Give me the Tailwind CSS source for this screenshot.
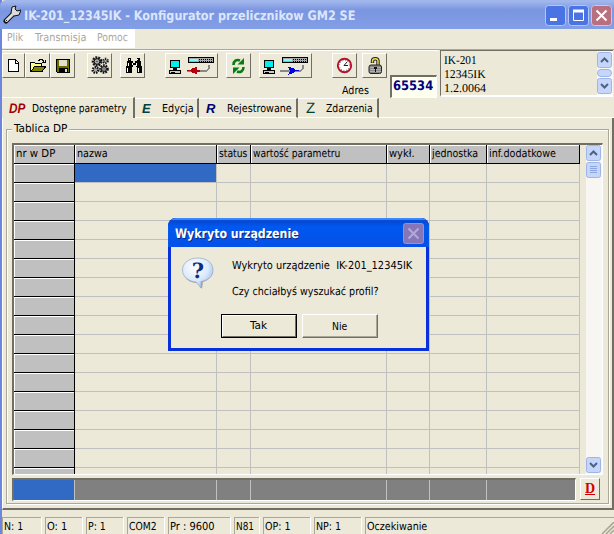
<!DOCTYPE html>
<html lang="pl">
<head>
<meta charset="utf-8">
<title>IK-201_12345IK - Konfigurator przelicznikow GM2 SE</title>
<script src="https://cdn.jsdelivr.net/npm/@tailwindcss/browser@4"></script>
</head>
<body class="w-[614px] h-[534px] overflow-hidden bg-[#ece9d8] font-['DejaVu_Sans_Condensed','DejaVu_Sans',sans-serif] text-[11px] leading-[14px] text-black [text-rendering:geometricPrecision]">
<div class="relative w-[614px] h-[534px] flex flex-col border-l-2 border-[#6c86de]">
  <!-- title bar -->
  <header class="-ml-[2px] h-[29px] shrink-0 flex items-center pl-[3px] pr-[2px] bg-linear-to-b from-[#a0b6ec] from-5% via-[#7b95e0] via-35% to-[#829fe6] rounded-tl-md">
    <svg class="w-[18px] h-[20px]" viewBox="3 5 18 20"><path d="M6 21l8-8" stroke="#111" stroke-width="5" stroke-linecap="round"/><path d="M12 7l-1 6 3 3 5-1 2-5-4 1-2-2 1-3z" fill="#ddd" stroke="#111"/><path d="M6.500 20.500l8-8" stroke="#ddd" stroke-width="3" stroke-linecap="round"/><path d="M6 20.500h1" stroke="#222" stroke-width="1"/></svg>
    <h1 class="ml-[3px] text-[13px] font-bold text-[#dce6fb] leading-5 grow pt-[4px]"><span data-w="331">IK-201_12345IK - Konfigurator przelicznikow GM2 SE</span></h1>
    <div class="flex gap-[2px] pt-[2px]">
      <svg class="size-[21px]" viewBox="0 0 21 21"><rect x=".5" y=".5" width="20" height="20" rx="3" fill="#4a74e4" stroke="#b5c7f5"/><path d="M5 14.500h7" stroke="#fff" stroke-width="3"/></svg>
      <svg class="size-[21px]" viewBox="0 0 21 21"><rect x=".5" y=".5" width="20" height="20" rx="3" fill="#4a74e4" stroke="#b5c7f5"/><path d="M5.500 6v9.500h10V6M5 6h11" stroke="#fff" fill="none"/><path d="M5 6h11" stroke="#fff" stroke-width="3"/></svg>
      <svg class="size-[21px]" viewBox="0 0 21 21"><rect x=".5" y=".5" width="20" height="20" rx="3" fill="#b8707e" stroke="#d0c4e4"/><path d="M5.500 5.500l10 10M15.500 5.500l-10 10" stroke="#fff" stroke-width="2"/></svg>
    </div>
  </header>
  <!-- menu -->
  <nav class="h-[20px] shrink-0 flex text-[#aca899]">
    <div class="w-[133px] h-[19px] bg-white flex pl-[5px] pt-[2px]">
      <span class="w-[28px]"><span data-w="16">Plik</span></span><span class="w-[62px]"><span data-w="51">Transmisja</span></span><span><span data-w="31">Pomoc</span></span>
    </div>
  </nav>
  <!-- toolbar -->
  <section class="h-[48px] shrink-0 flex border-t border-[#aca899] text-black">
    <div class="grow flex items-start border-t border-white pt-[2px]">
      <button class="w-[23px] h-[25px] border border-t-white border-l-white border-r-[#716f64] border-b-[#716f64]"><svg class="block w-[21px] h-[23px]" shape-rendering="crispEdges" viewBox="3 54 21 23"><path d="M8.500 59.500h7l3 3v9h-10z" fill="#fff" stroke="#000"/><path d="M15.500 59v4h3" fill="none" stroke="#000"/></svg></button>
      <button class="w-[25px] h-[25px] border border-t-white border-l-white border-r-[#716f64] border-b-[#716f64]"><svg class="block w-[23px] h-[23px]" shape-rendering="crispEdges" viewBox="26 54 23 23"><path d="M30.500 71.500v-9h4l1 1h6v3" fill="#ffff80" stroke="#000"/><path d="M31 71.500l4-5.500h11l-4 5.500z" fill="#808000" stroke="#000"/><path d="M38 60.500h1l1-1h2l2 2M42 62.500h3v-3" fill="none" stroke="#000"/></svg></button>
      <button class="w-[25px] h-[25px] border border-t-white border-l-white border-r-[#716f64] border-b-[#716f64]"><svg class="block w-[23px] h-[23px]" shape-rendering="crispEdges" viewBox="51 54 23 23"><path d="M56.500 59.500h13v13h-12l-1-1z" fill="#6b6b00" stroke="#000"/><path d="M59 60h8v6h-8z" fill="#e2dfcf"/><path d="M59 67.500h9v5h-9z" fill="#000"/><path d="M65 69h2v3h-2z" fill="#ddd"/></svg></button>
      <button class="ml-[12px] w-[25px] h-[25px] border border-t-white border-l-white border-r-[#716f64] border-b-[#716f64]"><svg class="block w-[23px] h-[23px]" viewBox="88 54 23 23"><g fill="#aaa" stroke="#111"><circle cx="97" cy="61.500" r="4" stroke-width="2.600" stroke-dasharray="1.800 1"/><circle cx="97" cy="61.500" r="2.800"/><circle cx="104" cy="69" r="3.600" stroke-width="2.400" stroke-dasharray="1.600 1"/><circle cx="104" cy="69" r="2.400"/><circle cx="95.500" cy="70" r="2.800" stroke-width="2.400" stroke-dasharray="1.400 1"/><circle cx="105.500" cy="61" r="2.200" stroke-width="2.200" stroke-dasharray="1.200 1"/></g><path d="M96.500 61h1v1h-1zM103.500 68.500h1v1h-1z" fill="#111"/></svg></button>
      <button class="ml-[8px] w-[25px] h-[25px] border border-t-white border-l-white border-r-[#716f64] border-b-[#716f64]"><svg class="block w-[23px] h-[23px]" shape-rendering="crispEdges" viewBox="121 54 23 23"><path d="M128 58h3v3h2v2h2v-2h2v-3h3v3h1v5h1v7h-5v-6h-1v-2h-3v2h-1v6h-6v-7h1v-5h1z" fill="#000"/><path d="M129 59h1v1h-1zM137 59h1v1h-1zM128 63h1v3h-1zM127 68h1v4h-1zM132 63h1v2h-1zM136 63h1v3h-1zM138 68h1v4h-1z" fill="#fff"/></svg></button>
      <button class="ml-[20px] w-[53px] h-[25px] border border-t-white border-l-white border-r-[#716f64] border-b-[#716f64]"><svg class="block w-[51px] h-[23px]" shape-rendering="crispEdges" viewBox="166 54 51 23"><path d="M170.500 60.500h9v7h-9z" fill="#0ee" stroke="#000"/><path d="M173 68h4v2h-4z" fill="#000"/><path d="M169.500 70.500h11v3h-11z" fill="#ccc" stroke="#000"/><path d="M171 72h4" stroke="#000"/><path d="M188.500 57.500h25v5h-25z" fill="#aaa" stroke="#000"/><path d="M190 59h8v2h-8z" fill="#7ff"/><path d="M199 59.500h14M199 61.500h14" stroke="#000" stroke-dasharray="1 1"/><path d="M187 70.500h20l2-2v-4" fill="none" stroke="#888" stroke-width="2"/><path d="M187 70h3l3-2 4-1v7l-4-1-3-2h-3zM197 70h3v2h-3z" fill="#b00010"/></svg></button>
      <button class="ml-[8px] w-[25px] h-[25px] border border-t-white border-l-white border-r-[#716f64] border-b-[#716f64]"><svg class="block w-[23px] h-[23px]" viewBox="227 54 23 23"><path d="M233.500 65c0-4 3-6 6.500-4.500M243.500 67c0 4-3 6-6.500 4.500" fill="none" stroke="#087c10" stroke-width="2.600"/><path d="M237.500 64.500h6.500v-6.500zM239.500 67.500h-6.500v6.500z" fill="#087c10"/></svg></button>
      <button class="ml-[8px] w-[53px] h-[25px] border border-t-white border-l-white border-r-[#716f64] border-b-[#716f64]"><svg class="block w-[51px] h-[23px]" shape-rendering="crispEdges" viewBox="260 54 51 23"><path d="M264.500 60.500h9v7h-9z" fill="#0ee" stroke="#000"/><path d="M267 68h4v2h-4z" fill="#000"/><path d="M263.500 70.500h11v3h-11z" fill="#ccc" stroke="#000"/><path d="M265 72h4" stroke="#000"/><path d="M282.500 57.500h25v5h-25z" fill="#aaa" stroke="#000"/><path d="M284 59h8v2h-8z" fill="#7ff"/><path d="M293 59.500h14M293 61.500h14" stroke="#000" stroke-dasharray="1 1"/><path d="M280 70.500h21l2-2v-4" fill="none" stroke="#888" stroke-width="2"/><path d="M288 67l5 1 3 2h3v1h-3l-3 2-5 2 2-4z" fill="#0000e8"/></svg></button>
      <button class="ml-[20px] w-[25px] h-[25px] border border-t-white border-l-white border-r-[#716f64] border-b-[#716f64]"><svg class="block w-[23px] h-[23px]" viewBox="333 54 23 23"><circle cx="344.500" cy="65.500" r="6.700" fill="#fff" stroke="#b8102c" stroke-width="1.900"/><circle cx="344.500" cy="65.500" r="5" fill="none" stroke="#333" stroke-dasharray=".7 1.920"/><path d="M347 62l-3 3.500h4" fill="none" stroke="#222"/></svg></button>
      <button class="ml-[5px] w-[25px] h-[25px] border border-t-white border-l-white border-r-[#716f64] border-b-[#716f64]"><svg class="block w-[23px] h-[23px]" viewBox="363 54 23 23"><path d="M372.500 63v-2c0-3 5.500-3 5.500 0v4" fill="none" stroke="#222" stroke-width="3.400"/><path d="M372.500 62.500v-1.500c0-3 5.500-3 5.500 0v4" fill="none" stroke="#eee14b" stroke-width="1.400"/><rect x="369" y="65" width="12.500" height="8.500" rx="2" fill="#888" stroke="#222"/><path d="M370 67.500h11M370 69.500h11M370 71.500h11" stroke="#ccc" stroke-width=".6"/><path d="M374 67h3v2h-1v3h-1v-3h-1z" fill="#111"/></svg></button>
    </div>
    <div class="w-[173px] ml-[2px] mr-px border-t border-l border-[#716f64] border-b-2 border-b-white flex bg-[#ece9d8]">
      <div class="grow pl-[3px] pt-[2px] font-['Liberation_Serif',serif] text-[12px] leading-[14px]"><div><span data-w="33">IK-201</span></div><div><span data-w="42">12345IK</span></div><div><span data-w="42">1.2.0064</span></div></div>
      <div class="w-[16px] flex flex-col justify-between bg-[#f8f8f4] py-px">
        <svg class="w-[15px] h-[16px]" viewBox="0 0 15 16"><rect x=".5" y=".5" width="14" height="15" rx="2" fill="#c6d6fb" stroke="#9eb5e8"/><path d="M4 10l3.500-3.500L11 10" fill="none" stroke="#4d6185" stroke-width="2"/></svg>
        <div class="h-[8px] w-[15px] rounded-sm border border-[#9eb5e8] bg-[#c6d6fb]"></div>
        <svg class="w-[15px] h-[16px]" viewBox="0 0 15 16"><rect x=".5" y=".5" width="14" height="15" rx="2" fill="#c6d6fb" stroke="#9eb5e8"/><path d="M4 6l3.500 3.500L11 6" fill="none" stroke="#4d6185" stroke-width="2"/></svg>
      </div>
    </div>
  </section>
  <!-- address label and field overlap the toolbar's lower edge -->
  <span class="absolute left-[340px] top-[84px]"><span data-w="27">Adres</span></span>
  <div class="absolute left-[388px] top-[75px] w-[47px] h-[23px] bg-[#fffff0] border-t-2 border-l-2 border-[#716f64] border-r border-b border-r-white border-b-white pl-px font-['DejaVu_Sans',sans-serif] font-bold text-[13px] leading-[19px] text-[#000080]"><span data-w="40">65534</span></div>
  <!-- tabs -->
  <div class="h-[21px] shrink-0 flex items-end text-black">
    <div class="h-[21px] w-[133px] border-t border-white border-r-2 border-r-[#716f64] flex items-start pl-[7px] pt-[2px]"><i class="w-[23px] font-['Liberation_Sans',sans-serif] font-bold text-[14px] leading-[16px] text-[#a00000]"><span data-w="16">DP</span></i><span class="pt-[2px]" ><span data-w="95">Dostępne parametry</span></span></div>
    <div class="h-[20px] w-[64px] border-t border-b border-white border-r-2 border-r-[#716f64] flex pl-[7px] pt-[2px]"><i class="w-[20px] font-['Liberation_Sans',sans-serif] font-bold text-[13px] leading-[15px] text-[#004040]">E</i><span class="pt-px"><span data-w="32">Edycja</span></span></div>
    <div class="h-[20px] w-[99px] border-t border-b border-white border-r-2 border-r-[#716f64] flex pl-[7px] pt-[2px]"><i class="w-[21px] font-['Liberation_Sans',sans-serif] font-bold text-[13px] leading-[15px] text-[#000070]">R</i><span class="pt-px"><span data-w="65">Rejestrowane</span></span></div>
    <div class="h-[20px] w-[81px] border-t border-b border-white border-r-2 border-r-[#716f64] flex pl-[8px] pt-[2px]"><i class="w-[20px] font-['Liberation_Sans',sans-serif] not-italic text-[15px] leading-[15px] text-[#004030]">Z</i><span class="pt-px"><span data-w="47">Zdarzenia</span></span></div>
    <div class="grow h-px bg-white"></div>
  </div>
  <!-- tab page -->
  <main class="relative h-[392px] shrink-0 flex flex-col border-r-2 border-b-2 border-[#716f64] border-l border-l-white pt-[11px] px-[3px] pb-[4px]">
    <div class="grow min-h-0 border border-[#aca899] shadow-[1px_1px_0_#fff,inset_1px_1px_0_#fff] flex flex-col pl-[5px] pr-[5px] pt-[13px] ">
      <div class="h-[332px] flex border-t-2 border-l-2 border-t-[#716f64] border-l-[#716f64] border-r border-b border-r-white border-b-white overflow-hidden">
        <div id="grid" class="w-[566px] shrink-0 overflow-hidden h-[329px]"></div>
        <div class="w-[6px]"></div>
        <div class="w-[16px] flex flex-col bg-[#f7f6f2]">
          <svg class="w-[16px] h-[17px]" viewBox="0 0 16 17"><rect x=".5" y=".5" width="14" height="15" rx="2" fill="#c6d6fb" stroke="#9eb5e8"/><path d="M4 10l3.500-3.500L11 10" fill="none" stroke="#4d6185" stroke-width="2"/></svg>
          <svg class="w-[16px] h-[17px]" viewBox="0 0 16 17"><rect x=".5" y=".5" width="14" height="15" rx="2" fill="#c6d6fb" stroke="#9eb5e8"/><path d="M4 4.500h7M4 6.500h7M4 8.500h7M4 10.500h7" stroke="#8ea6e0"/></svg>
          <div class="grow"></div>
          <svg class="w-[16px] h-[17px]" viewBox="0 0 16 17"><rect x=".5" y=".5" width="14" height="15" rx="2" fill="#c6d6fb" stroke="#9eb5e8"/><path d="M4 6l3.500 3.500L11 6" fill="none" stroke="#4d6185" stroke-width="2"/></svg>
        </div>
      </div>
      <div class="mt-[3px] h-[24px] flex gap-[4px]">
        <div class="w-[564px] h-[23px] flex border-t-2 border-l-2 border-[#716f64] border-r border-b border-r-white border-b-white bg-[#808080]">
          <div class="w-[61px] bg-[#316ac5] border-r border-[#c0c0c0]"></div><div class="w-[142px] border-r border-[#c0c0c0]"></div><div class="w-[34px] border-r border-[#c0c0c0]"></div><div class="w-[136px] border-r border-[#c0c0c0]"></div><div class="w-[43px] border-r border-[#c0c0c0]"></div><div class="w-[57px] border-r border-[#c0c0c0]"></div>
        </div>
        <button class="w-[20px] h-[22px] border border-t-white border-l-white border-r-[#716f64] border-b-[#716f64] font-['Liberation_Serif',serif] font-bold underline text-[14px] leading-[20px] text-[#d00000]">D</button>
      </div>
    </div>
    <span class="absolute left-[9px] top-[4px] px-[2px] bg-[#ece9d8]"><span data-w="53">Tablica DP</span></span>
  </main>
  <!-- status bar -->
  <footer class="grow flex items-end gap-[4px] pt-[7px]" id="status"></footer>
  <svg class="absolute right-0 bottom-0 w-[13px] h-[12px]" viewBox="0 0 13 12"><path d="M1 12L13 0M5 12l8-8M9 12l4-4" stroke="#aca899" stroke-width="1.600"/></svg>

  <!-- dialog -->
  <section class="absolute left-[166px] top-[218px] w-[261px] h-[133px] rounded-t-lg bg-[#0831d9] overflow-hidden flex flex-col px-[3px] pb-[3px]">
    <div class="-mx-[3px] h-[29px] shrink-0 flex items-center pl-[7px] pr-[5px] pt-[2px] bg-linear-to-b from-[#0a3fc8] via-[#0058ee] via-30% to-[#0550e8] shadow-[inset_0_2px_1px_#3a8cff]">
      <h2 class="grow font-bold text-[13px] leading-5 text-white pt-[2px] [text-shadow:1px_1px_0_#0a2a80]"><span data-w="124">Wykryto urządzenie</span></h2>
      <svg class="size-[21px]" viewBox="0 0 21 21"><rect x=".5" y=".5" width="20" height="20" rx="2" fill="#8676b8" stroke="#8f93d8"/><path d="M5.500 5.500l10 10M15.500 5.500l-10 10" stroke="#b4a9d4" stroke-width="2"/></svg>
    </div>
    <div class="grow bg-[#ece9d8] flex flex-col">
      <div class="flex h-[67px] pl-[10px] pt-[9px]">
        <svg class="w-[34px] h-[36px]" viewBox="0 0 34 36"><defs><radialGradient id="b" cx=".4" cy=".3" r=".8"><stop offset="0" stop-color="#fff"/><stop offset=".55" stop-color="#dbe9fb"/><stop offset="1" stop-color="#8eb4e6"/></radialGradient></defs><path d="M3 19c3 7 9 8 14 8l4 6 1-7c6-2 9-6 10-10z" fill="#8a8a85" opacity=".7"/><path d="M17 2C8 2 1.500 7 1.500 14S8 25.500 15 26l5 6v-6.500c7-1 12-5 12-11.500C32 7 26 2 17 2z" fill="url(#b)" stroke="#94a9c6" stroke-width=".7"/><text x="17" y="22" text-anchor="middle" font-family="DejaVu Serif" font-weight="bold" font-size="21" fill="#0c2c80">?</text></svg>
        <div class="ml-[17px] pt-[3px]"><div class="h-[26px]"><span data-w="180">Wykryto urządzenie  IK-201_12345IK</span></div><div><span data-w="146">Czy chciałbyś wyszukać profil?</span></div></div>
      </div>
      <div class="flex gap-[5px] pl-[50px]">
        <button class="w-[76px] h-[24px] border border-black p-0"><span class="block h-[22px] leading-[19px] border border-t-white border-l-white border-r-[#716f64] border-b-[#716f64]"><span data-w="17">Tak</span></span></button>
        <button class="w-[76px] h-[24px] border border-t-white border-l-white border-r-[#716f64] border-b-[#716f64] shadow-[inset_-1px_-1px_0_#aca899] leading-[21px]"><span data-w="15">Nie</span></button>
      </div>
    </div>
  </section>
</div>
<script>
const cols = [['nr w DP',61,39],['nazwa',142,31],['status',34,28],['wartość parametru',136,87],['wykł.',43,26],['jednostka',57,46],['inf.dodatkowe',93,67]];
const grid = document.getElementById('grid');
for (let r = 0; r < 18; r++) {
  const row = document.createElement('div');
  row.className = 'flex h-[19px]';
  cols.forEach(([name, width, textWidth], c) => {
    const cell = document.createElement('div');
    cell.className = (r === 0 || c === 0)
      ? 'h-[19px] shrink-0 bg-[#c0c0c0] border-r border-b border-black shadow-[inset_1px_1px_0_#fff] pl-[2px] pt-[2px]'
      : 'h-[19px] shrink-0 border-r border-b border-[#c0c0c0]' + (r === 1 && c === 1 ? ' bg-[#316ac5]' : '');
    cell.style.width = width + 'px';
    if (r === 0) cell.innerHTML = `<span data-w="${textWidth}">${name}</span>`;
    row.append(cell);
  });
  grid.append(row);
}
const panels = [['N: 1',39,19],['O: 1',37,20],['P: 1',37,18],['COM2',37,28],['Pr : 9600',62,45],['N81',25,18],['OP: 1',47,26],['NP: 1',47,25],['Oczekiwanie',252,60]];
for (const [name, width, textWidth] of panels) {
  const panel = document.createElement('div');
  panel.className = 'h-[17px] shrink-0 border-t border-l border-[#aca899] shadow-[1px_0_0_#fff] pl-px pt-[2px]';
  panel.style.width = width + 'px';
  panel.innerHTML = `<span data-w="${textWidth}">${name}</span>`;
  document.getElementById('status').append(panel);
}
// Stretch or condense each label so that it fills its nominal width
function fit(label) {
  const natural = label.offsetWidth;
  const target = Number(label.dataset.w);
  label.style.transform = `scaleX(${target / natural})`;
  label.style.marginRight = target - natural + 'px';
}
const observer = new ResizeObserver(entries => entries.forEach(entry => fit(entry.target)));
document.querySelectorAll('[data-w]').forEach(label => {
  label.classList.add('inline-block', 'w-max', 'whitespace-pre', 'origin-left', 'align-top');
  fit(label);
  observer.observe(label);
});
</script>
</body>
</html>
